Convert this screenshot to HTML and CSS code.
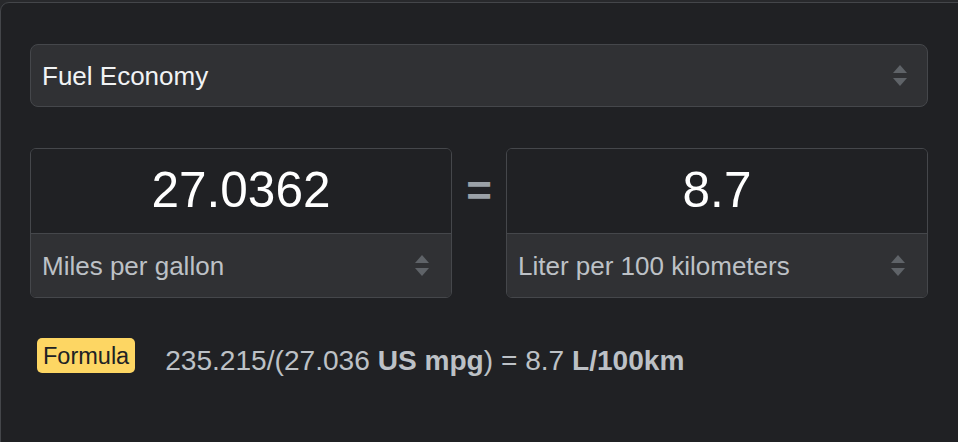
FILE: index.html
```html
<!DOCTYPE html>
<html lang="en">
<head>
<meta charset="utf-8">
<title>Fuel Economy converter</title>
<link rel="stylesheet" href="styles.css">
</head>
<body>
<div class="panel">
  <div class="select main-select">
    <span class="select-label">Fuel Economy</span>
    <svg class="arrows" width="14" height="22" viewBox="0 0 14 22"><polygon points="7,0 14,8 0,8"/><polygon points="0,13 14,13 7,21"/></svg>
  </div>
  <div class="converter">
    <div class="unit-box">
      <div class="value">27.0362</div>
      <div class="unit-select">
        <span class="unit-label">Miles per gallon</span>
        <svg class="arrows" width="14" height="22" viewBox="0 0 14 22"><polygon points="7,0 14,8 0,8"/><polygon points="0,13 14,13 7,21"/></svg>
      </div>
    </div>
    <div class="equals">=</div>
    <div class="unit-box">
      <div class="value">8.7</div>
      <div class="unit-select">
        <span class="unit-label">Liter per 100 kilometers</span>
        <svg class="arrows" width="14" height="22" viewBox="0 0 14 22"><polygon points="7,0 14,8 0,8"/><polygon points="0,13 14,13 7,21"/></svg>
      </div>
    </div>
  </div>
  <div class="formula-row">
    <span class="badge">Formula</span>
    <span class="formula">235.215/(27.036 <b>US mpg</b>) = 8.7 <b>L/100km</b></span>
  </div>
</div>
</body>
</html>
```

FILE: styles.css
```css
html, body {
  margin: 0;
  padding: 0;
  background: #28292c;
  overflow: hidden;
  height: 442px;
}
body {
  font-family: "Liberation Sans", Arial, sans-serif;
}
.panel {
  margin-top: 2px;
  width: 990px;
  height: 460px;
  box-sizing: border-box;
  background: #202124;
  border: 1px solid #44464a;
  border-radius: 9px;
  padding: 41px 0 0 29px;
}
.select {
  box-sizing: border-box;
  width: 898px;
  height: 63px;
  background: #303134;
  border: 1px solid #45474b;
  border-radius: 8px;
  display: flex;
  align-items: center;
  justify-content: space-between;
  padding: 0 20px 0 11px;
}
.select-label {
  color: #f1f3f4;
  font-size: 26px;
  line-height: 30px;
}
.arrows {
  fill: #5f6368;
  display: block;
}
.converter {
  margin-top: 41px;
  display: flex;
  align-items: center;
  width: 898px;
}
.unit-box {
  box-sizing: border-box;
  width: 422px;
  height: 150px;
  border: 1px solid #45474b;
  border-radius: 6px;
  overflow: hidden;
  display: flex;
  flex-direction: column;
}
.value {
  height: 85px;
  display: flex;
  align-items: center;
  justify-content: center;
  color: #ffffff;
  font-size: 49.5px;
  line-height: 49px;
  padding-bottom: 3px;
  box-sizing: border-box;
  background: #202124;
  border-bottom: 1px solid #45474b;
}
.unit-select {
  flex: 1;
  background: #303134;
  display: flex;
  align-items: center;
  justify-content: space-between;
  padding: 0 22px 0 11px;
}
.unit-label {
  color: #bdc1c6;
  font-size: 26px;
  line-height: 30px;
}
.equals {
  flex: 1;
  text-align: center;
  color: #9aa0a6;
  font-size: 44px;
  font-weight: bold;
  line-height: 44px;
  padding-bottom: 64px;
}
.formula-row {
  margin-top: 40px;
  display: flex;
  align-items: flex-start;
  padding-left: 7px;
}
.badge {
  box-sizing: border-box;
  height: 35px;
  padding: 2px 6px 0;
  line-height: 33px;
  font-size: 23.5px;
  color: #202124;
  background: #fdd663;
  border-radius: 5px;
}
.formula {
  margin-left: 30px;
  margin-top: 7px;
  font-size: 28.1px;
  line-height: 32px;
  color: #bdc1c6;
}
.formula b {
  font-weight: bold;
}
```
